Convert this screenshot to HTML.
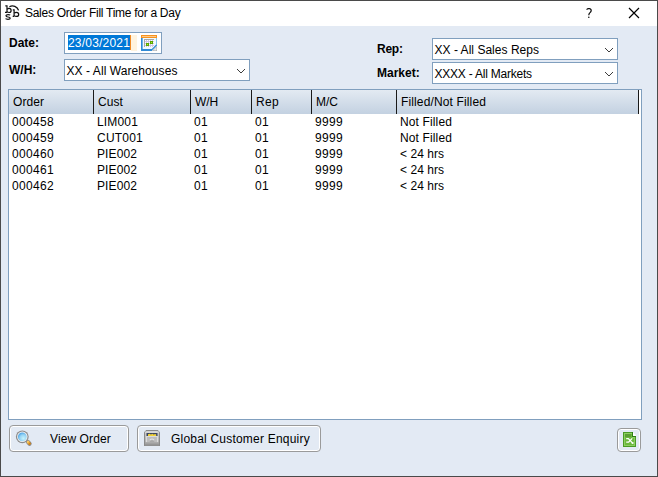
<!DOCTYPE html>
<html><head><meta charset="utf-8">
<style>
*{box-sizing:border-box;margin:0;padding:0}
html,body{width:658px;height:477px;overflow:hidden;background:#4a4a4a}
body{position:relative;font-family:"Liberation Sans",sans-serif;font-size:12px;color:#000}
.a{position:absolute}
.t{position:absolute;white-space:nowrap;line-height:14px;height:14px}
#win{position:absolute;left:1px;top:1px;width:656px;height:475px;background:#e3eaf4}
#title{position:absolute;left:1px;top:1px;width:656px;height:25px;background:#fff}
.box{position:absolute;background:#fff;border:1px solid #809fbe;height:22px}
#grid{position:absolute;left:8px;top:89px;width:634px;height:331px;background:#fff;border:1px solid #809fbe}
#hdr{position:absolute;left:9px;top:90px;width:630px;height:24px;background:linear-gradient(#e3eaf2,#c3d1e1)}
.sep{position:absolute;top:90px;width:1px;height:24px;background:#1a1a1a}
.btn{position:absolute;border:1px solid #9a9a9a;border-radius:4px;background:#e3eaf4;box-shadow:inset 0 0 0 1px #fff}
</style></head>
<body>
<div id="win"></div><div id="title"></div>
<svg class="a" style="left:0;top:0" width="24" height="24" viewBox="0 0 24 24" fill="none" stroke="#111">
  <path d="M5.3 5.9H7V12.4M5 12.4H7" stroke-width="1.2"/>
  <path d="M7 9.3Q7.8 8.4 9.2 8.4Q11.1 8.4 11.1 10.5Q11.1 12.5 9.2 12.5Q7.8 12.5 7 11.7" stroke-width="1.2"/>
  <path d="M10.2 15.1Q9.6 14.6 8 14.6Q6 14.6 6 15.8Q6 16.8 8 17Q10.2 17.2 10.2 18.3Q10.2 19.3 8 19.3Q6.1 19.3 5.5 18.7" stroke-width="1.2"/>
  <path d="M12.8 9.9H14.1V16.3M12.7 16.3H14.1" stroke-width="1.2"/>
  <path d="M14.1 13.2Q15 12.3 16.5 12.3Q18.7 12.3 18.7 14.4Q18.7 16.4 16.5 16.4Q15 16.4 14.1 15.6" stroke-width="1.2"/>
  <path d="M9.4 6.8A6.4 6.4 0 0 1 18.6 10.4" stroke-width="1.3"/>
</svg>
<div class="t" style="left:25px;top:6px;letter-spacing:-0.280px">Sales Order Fill Time for a Day</div>
<svg class="a" style="left:580px;top:4px" width="16" height="16" viewBox="580 4 16 16" fill="none">
<path d="M586.6 9.6Q587.4 8.5 589 8.5Q591.2 8.6 591.2 10.5Q591.2 11.7 590 12.6Q588.8 13.5 588.8 15.2" stroke="#000" stroke-width="1.15"/>
<circle cx="588.8" cy="17.2" r="0.75" fill="#000"/></svg>
<svg class="a" style="left:628px;top:7px" width="12" height="12" viewBox="0 0 12 12">
  <path d="M1 1L11 11M11 1L1 11" stroke="#000" stroke-width="1.2"/></svg>
<div class="t" style="left:9px;top:36px;letter-spacing:0.000px;font-weight:bold">Date:</div>
<div class="box" style="left:64px;top:32px;width:98px"></div>
<div class="a" style="left:68px;top:35px;width:63px;height:15px;background:#0078d7"></div>
<div class="t" style="left:68px;top:36px;letter-spacing:0.194px;color:#fff">23/03/2021</div>
<div class="a" style="left:130px;top:35px;width:1px;height:15px;background:#f08a24"></div>
<div class="a" style="left:131px;top:35px;width:6px;height:16px;background:#fff3de"></div>
<svg class="a" style="left:141px;top:35px" width="16" height="16" viewBox="0 0 16 16" shape-rendering="crispEdges">
  <rect x="1" y="3" width="14" height="12" fill="#effaff"/>
  <rect x="0" y="0" width="16" height="3" fill="#f7931e"/>
  <rect x="1" y="1" width="14" height="1" fill="#fcc88a"/>
  <rect x="0" y="3" width="1" height="12" fill="#2f8ad6"/>
  <rect x="1" y="3" width="1" height="12" fill="#6fb3e8"/>
  <rect x="0" y="14" width="11" height="2" fill="#2f8ad6"/>
  <rect x="15" y="3" width="1" height="8" fill="#86c6f0"/>
  <rect x="3" y="4" width="10" height="8" fill="#a8a8a8"/>
  <rect x="4" y="5" width="9" height="7" fill="#cdc6e6"/>
  <rect x="4" y="5" width="1" height="1" fill="#ffffff"/>
  <rect x="4" y="7" width="1" height="1" fill="#ffffff"/>
  <rect x="4" y="9" width="1" height="1" fill="#ffffff"/>
  <rect x="4" y="11" width="1" height="1" fill="#ffffff"/>
  <rect x="6" y="5" width="1" height="1" fill="#ffffff"/>
  <rect x="6" y="7" width="1" height="1" fill="#ffffff"/>
  <rect x="6" y="9" width="1" height="1" fill="#ffffff"/>
  <rect x="6" y="11" width="1" height="1" fill="#ffffff"/>
  <rect x="8" y="5" width="1" height="1" fill="#ffffff"/>
  <rect x="8" y="7" width="1" height="1" fill="#ffffff"/>
  <rect x="8" y="9" width="1" height="1" fill="#ffffff"/>
  <rect x="8" y="11" width="1" height="1" fill="#ffffff"/>
  <rect x="10" y="5" width="1" height="1" fill="#ffffff"/>
  <rect x="10" y="7" width="1" height="1" fill="#ffffff"/>
  <rect x="10" y="9" width="1" height="1" fill="#ffffff"/>
  <rect x="10" y="11" width="1" height="1" fill="#ffffff"/>
  <rect x="12" y="5" width="1" height="1" fill="#ffffff"/>
  <rect x="12" y="7" width="1" height="1" fill="#ffffff"/>
  <rect x="12" y="9" width="1" height="1" fill="#ffffff"/>
  <rect x="12" y="11" width="1" height="1" fill="#ffffff"/>
  <rect x="5" y="8" width="3" height="3" fill="#5aa800"/>
  <rect x="6" y="9" width="1" height="1" fill="#b4e03c"/>
  <rect x="9" y="6" width="3" height="3" fill="#5aa800"/>
  <rect x="10" y="7" width="1" height="1" fill="#b4e03c"/>
  <path d="M11 16L16 11V16Z" fill="#a6a6a6" shape-rendering="auto"/>
  <path d="M12 15.5L15.5 12V15.5Z" fill="#e4eaf0" shape-rendering="auto"/>
  <path d="M10 15.6L15.6 10" stroke="#2f8ad6" stroke-width="1.2" shape-rendering="auto"/>
</svg>
<div class="t" style="left:9px;top:63px;letter-spacing:0.000px;font-weight:bold">W/H:</div>
<div class="box" style="left:64px;top:59px;width:186px"></div>
<div class="t" style="left:66.5px;top:64px;letter-spacing:0.073px">XX - All Warehouses</div>
<svg class="a" style="left:237px;top:69px" width="8" height="4" shape-rendering="crispEdges" fill="#3c3c3c">
<rect x="0" y="0" width="1" height="1"/><rect x="1" y="1" width="1" height="1"/><rect x="2" y="2" width="1" height="1"/><rect x="3" y="3" width="2" height="1"/>
<rect x="5" y="2" width="1" height="1"/><rect x="6" y="1" width="1" height="1"/><rect x="7" y="0" width="1" height="1"/></svg>
<div class="t" style="left:377px;top:42px;letter-spacing:-0.250px;font-weight:bold">Rep:</div>
<div class="box" style="left:432px;top:38px;width:186px"></div>
<div class="t" style="left:434.5px;top:43px;letter-spacing:0.023px">XX - All Sales Reps</div>
<svg class="a" style="left:605px;top:48px" width="8" height="4" shape-rendering="crispEdges" fill="#3c3c3c">
<rect x="0" y="0" width="1" height="1"/><rect x="1" y="1" width="1" height="1"/><rect x="2" y="2" width="1" height="1"/><rect x="3" y="3" width="2" height="1"/>
<rect x="5" y="2" width="1" height="1"/><rect x="6" y="1" width="1" height="1"/><rect x="7" y="0" width="1" height="1"/></svg>
<div class="t" style="left:377px;top:66px;letter-spacing:0.000px;font-weight:bold">Market:</div>
<div class="box" style="left:432px;top:62px;width:186px"></div>
<div class="t" style="left:434.5px;top:67px;letter-spacing:-0.224px">XXXX - All Markets</div>
<svg class="a" style="left:605px;top:72px" width="8" height="4" shape-rendering="crispEdges" fill="#3c3c3c">
<rect x="0" y="0" width="1" height="1"/><rect x="1" y="1" width="1" height="1"/><rect x="2" y="2" width="1" height="1"/><rect x="3" y="3" width="2" height="1"/>
<rect x="5" y="2" width="1" height="1"/><rect x="6" y="1" width="1" height="1"/><rect x="7" y="0" width="1" height="1"/></svg>
<div id="grid"></div><div id="hdr"></div>
<div class="sep" style="left:93px"></div>
<div class="sep" style="left:190px"></div>
<div class="sep" style="left:251px"></div>
<div class="sep" style="left:311px"></div>
<div class="sep" style="left:396px"></div>
<div class="sep" style="left:638px"></div>
<div class="t" style="left:13px;top:95px;letter-spacing:0.065px">Order</div>
<div class="t" style="left:98px;top:95px;letter-spacing:0.082px">Cust</div>
<div class="t" style="left:195px;top:95px;letter-spacing:-0.109px">W/H</div>
<div class="t" style="left:256px;top:95px;letter-spacing:0.329px">Rep</div>
<div class="t" style="left:316px;top:95px;letter-spacing:0.001px">M/C</div>
<div class="t" style="left:401px;top:95px;letter-spacing:0.136px">Filled/Not Filled</div>
<div class="t" style="left:12px;top:115px;letter-spacing:0.326px">000458</div>
<div class="t" style="left:97px;top:115px;letter-spacing:0.162px">LIM001</div>
<div class="t" style="left:194px;top:115px;letter-spacing:0.326px">01</div>
<div class="t" style="left:255px;top:115px;letter-spacing:0.326px">01</div>
<div class="t" style="left:315px;top:115px;letter-spacing:0.326px">9999</div>
<div class="t" style="left:400px;top:115px;letter-spacing:0.132px">Not Filled</div>
<div class="t" style="left:12px;top:131px;letter-spacing:0.326px">000459</div>
<div class="t" style="left:97px;top:131px;letter-spacing:0.219px">CUT001</div>
<div class="t" style="left:194px;top:131px;letter-spacing:0.326px">01</div>
<div class="t" style="left:255px;top:131px;letter-spacing:0.326px">01</div>
<div class="t" style="left:315px;top:131px;letter-spacing:0.326px">9999</div>
<div class="t" style="left:400px;top:131px;letter-spacing:0.132px">Not Filled</div>
<div class="t" style="left:12px;top:147px;letter-spacing:0.326px">000460</div>
<div class="t" style="left:97px;top:147px;letter-spacing:0.106px">PIE002</div>
<div class="t" style="left:194px;top:147px;letter-spacing:0.326px">01</div>
<div class="t" style="left:255px;top:147px;letter-spacing:0.326px">01</div>
<div class="t" style="left:315px;top:147px;letter-spacing:0.326px">9999</div>
<div class="t" style="left:400px;top:147px;letter-spacing:0.038px">&lt; 24 hrs</div>
<div class="t" style="left:12px;top:163px;letter-spacing:0.326px">000461</div>
<div class="t" style="left:97px;top:163px;letter-spacing:0.106px">PIE002</div>
<div class="t" style="left:194px;top:163px;letter-spacing:0.326px">01</div>
<div class="t" style="left:255px;top:163px;letter-spacing:0.326px">01</div>
<div class="t" style="left:315px;top:163px;letter-spacing:0.326px">9999</div>
<div class="t" style="left:400px;top:163px;letter-spacing:0.038px">&lt; 24 hrs</div>
<div class="t" style="left:12px;top:179px;letter-spacing:0.326px">000462</div>
<div class="t" style="left:97px;top:179px;letter-spacing:0.106px">PIE002</div>
<div class="t" style="left:194px;top:179px;letter-spacing:0.326px">01</div>
<div class="t" style="left:255px;top:179px;letter-spacing:0.326px">01</div>
<div class="t" style="left:315px;top:179px;letter-spacing:0.326px">9999</div>
<div class="t" style="left:400px;top:179px;letter-spacing:0.038px">&lt; 24 hrs</div>
<div class="btn" style="left:9px;top:425px;width:120px;height:27px"></div>
<svg class="a" style="left:14px;top:428px" width="20" height="20" viewBox="0 0 20 20">
  <defs><radialGradient id="lens" cx="0.62" cy="0.68" r="0.75"><stop offset="0" stop-color="#c8f4fc"/><stop offset="0.55" stop-color="#95d3f4"/><stop offset="1" stop-color="#3a97e0"/></radialGradient>
  <linearGradient id="hdl" x1="0" y1="0" x2="1" y2="1"><stop offset="0" stop-color="#f8c860"/><stop offset="1" stop-color="#d98510"/></linearGradient></defs>
  <path d="M13.9 13.9L15.6 15.7" stroke="#8a8a8a" stroke-width="4.2" stroke-linecap="round"/>
  <path d="M14.1 14.1L15.5 15.6" stroke="url(#hdl)" stroke-width="2.8" stroke-linecap="round"/>
  <circle cx="8.3" cy="8.8" r="6.4" fill="#8c8c8c"/>
  <circle cx="8.3" cy="8.8" r="5.2" fill="#f4f4f4"/>
  <circle cx="8.3" cy="8.8" r="4.4" fill="url(#lens)"/>
</svg>
<div class="t" style="left:50px;top:432px;letter-spacing:0.098px">View Order</div>
<div class="btn" style="left:137px;top:425px;width:184px;height:27px"></div>
<svg class="a" style="left:144px;top:430px" width="16" height="16" viewBox="0 0 16 16">
  <defs><linearGradient id="cb" x1="0" y1="0" x2="0" y2="1"><stop offset="0" stop-color="#cfcfcf"/><stop offset="1" stop-color="#a8a8a8"/></linearGradient></defs>
  <path d="M2.2 0H13.8L16 2.2V16H0V2.2Z" fill="#8a8a8a"/>
  <path d="M2.6 1H13.4L15 2.6V15H1V2.6Z" fill="url(#cb)"/>
  <rect x="1" y="1.6" width="14" height="1" fill="#dedede"/>
  <rect x="2.5" y="3" width="11" height="3" fill="#3c4662"/>
  <path d="M4 6V4.3L5.6 3.8L7 4.6L8.2 3.8L9.6 4.6L11.2 3.9L12.2 4.5V6Z" fill="#f2d23a"/>
  <rect x="2" y="6" width="12" height="6.5" fill="#dadada"/>
  <rect x="3" y="7" width="10" height="5.5" fill="#bdbdbd"/>
  <path d="M5.8 10.8V9.3Q8 7.6 10.2 9.3V10.8H9.2V9.9Q8 9 6.8 9.9V10.8Z" fill="#e2e2e2"/>
  <rect x="5.8" y="10.6" width="4.4" height="1" fill="#9c9c9c"/>
  <rect x="1" y="12.5" width="14" height="3" fill="#969696"/>
  <rect x="1" y="12.5" width="14" height="1" fill="#acacac"/>
</svg>
<div class="t" style="left:171px;top:432px;letter-spacing:0.208px">Global Customer Enquiry</div>
<div class="btn" style="left:617px;top:428px;width:24px;height:24px"></div>
<svg class="a" style="left:622px;top:431px" width="16" height="17" viewBox="0 0 16 17" shape-rendering="crispEdges">
  <path d="M1 1H11V5H14V16H1Z" fill="#4a9a26"/>
  <path d="M2 2H10V6H13V15H2Z" fill="#8ccf60"/>
  <path d="M3 3H10V7H12V14H3Z" fill="#6cb83e"/>
  <rect x="3" y="3" width="6" height="3" fill="#5c9f34"/>
  <path d="M10 1H11V5H14V6H10Z" fill="#2e7d16"/>
  <path d="M11 1.3L13.9 4.2V5H11Z" fill="#ffffff" shape-rendering="auto"/>
  <g fill="none" stroke="#fff" stroke-width="1.3" shape-rendering="auto">
    <path d="M4.2 7.6H6.3L10.2 11.6"/>
    <path d="M10.2 7.4L6.6 11.2H4.2"/>
  </g>
  <circle cx="10.6" cy="12" r="1.1" fill="#fff" shape-rendering="auto"/>
</svg>
</body></html>
